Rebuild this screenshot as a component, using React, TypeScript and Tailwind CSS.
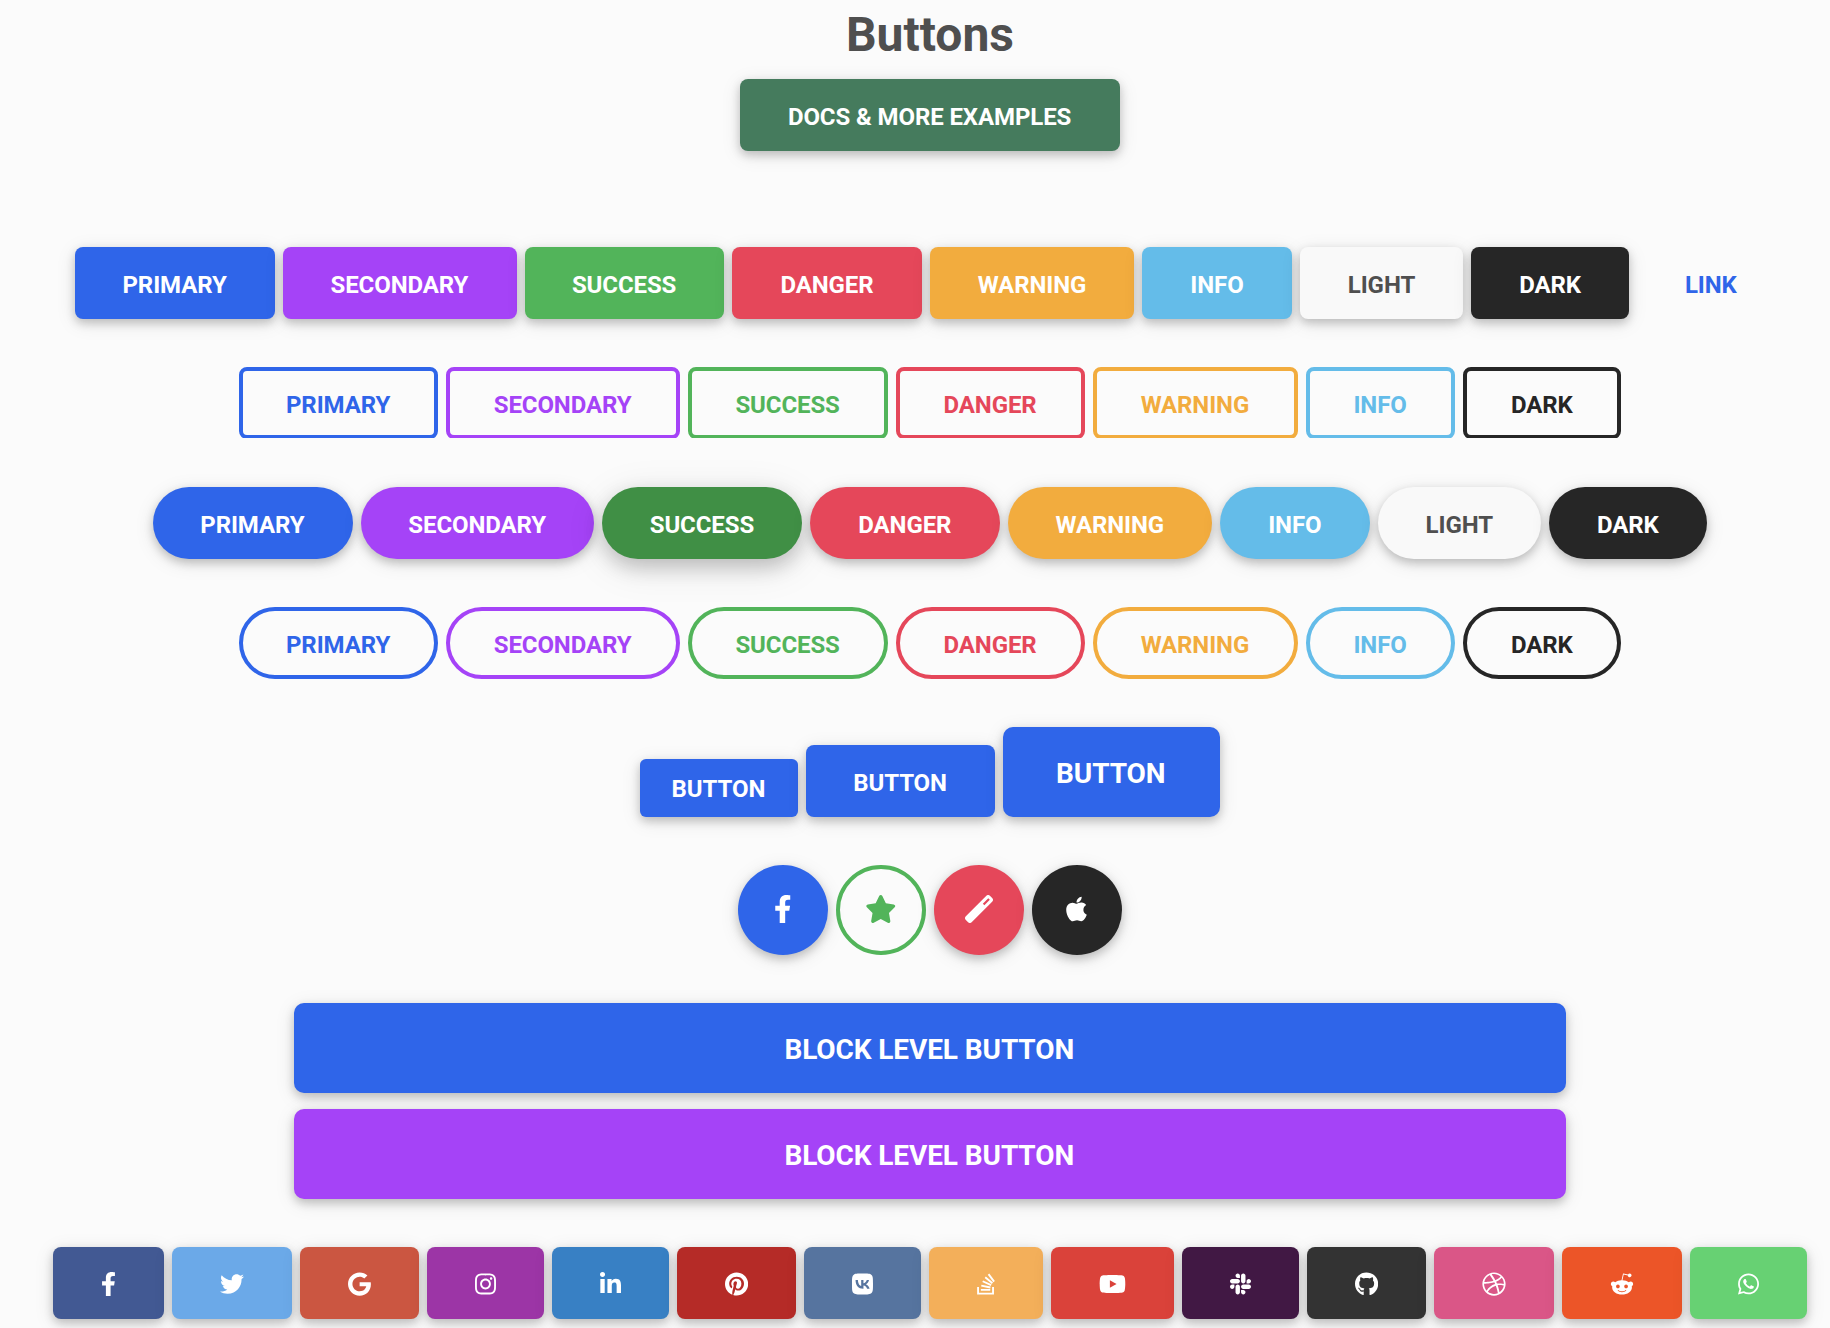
import React from "react";
import {
  FaFacebookF,
  FaTwitter,
  FaGoogle,
  FaInstagram,
  FaLinkedinIn,
  FaPinterest,
  FaStackOverflow,
  FaYoutube,
  FaSlack,
  FaGithub,
  FaDribbble,
  FaRedditAlien,
  FaWhatsapp,
  FaApple,
} from "react-icons/fa";
import { FaStar, FaVk } from "react-icons/fa6";

const SHADOW = "shadow-[0_4px_10px_0_rgba(0,0,0,0.2),0_4px_20px_0_rgba(0,0,0,0.1)]";
const BASE = "flex shrink-0 items-center justify-center whitespace-nowrap uppercase font-bold tracking-[-0.1px]";
const MD = "h-[72px] pt-1 pr-[0.8px] text-[24px] leading-9";

const solid = [
  { label: "Primary", w: "w-[200px]", c: "bg-[#2f65e9] text-white" },
  { label: "Secondary", w: "w-[233.6px]", c: "bg-[#a543f7] text-white" },
  { label: "Success", w: "w-[199.8px]", c: "bg-[#52b45a] text-white" },
  { label: "Danger", w: "w-[190px]", c: "bg-[#e5475a] text-white" },
  { label: "Warning", w: "w-[204px]", c: "bg-[#f2ac3e] text-white" },
  { label: "Info", w: "w-[150px]", c: "bg-[#64bce9] text-white" },
  { label: "Light", w: "w-[163px]", c: "bg-[#f9f9f9] text-[#4f4f4f]" },
  { label: "Dark", w: "w-[158px]", c: "bg-[#262626] text-white" },
];

const outline = [
  { label: "Primary", w: "w-[199px]", c: "border-[#2f65e9] text-[#2f65e9]" },
  { label: "Secondary", w: "w-[234px]", c: "border-[#a543f7] text-[#a543f7]" },
  { label: "Success", w: "w-[200px]", c: "border-[#52b45a] text-[#52b45a]" },
  { label: "Danger", w: "w-[189px]", c: "border-[#e5475a] text-[#e5475a]" },
  { label: "Warning", w: "w-[204.6px]", c: "border-[#f2ac3e] text-[#f2ac3e]" },
  { label: "Info", w: "w-[149.8px]", c: "border-[#64bce9] text-[#64bce9]" },
  { label: "Dark", w: "w-[157.6px]", c: "border-[#262626] text-[#262626]" },
];

const social = [
  { Icon: FaFacebookF, w: "w-[111px]", i: "w-[15px]", bg: "bg-[#425993]" },
  { Icon: FaTwitter, w: "w-[120px]", i: "w-[24px]", bg: "bg-[#6ba9e8]" },
  { Icon: FaGoogle, w: "w-[118.9px]", i: "w-[22.9px]", bg: "bg-[#cb5641]" },
  { Icon: FaInstagram, w: "w-[117px]", i: "w-[21px]", bg: "bg-[#9c35a6]" },
  { Icon: FaLinkedinIn, w: "w-[117px]", i: "w-[21px]", bg: "bg-[#3880c4]" },
  { Icon: FaPinterest, w: "w-[119.2px]", i: "w-[23.2px]", bg: "bg-[#b52b27]" },
  { Icon: FaVk, w: "w-[117px]", i: "w-[21px]", bg: "bg-[#56749f]" },
  { Icon: FaStackOverflow, w: "w-[114px]", i: "w-[18px]", bg: "bg-[#f3af5a]" },
  { Icon: FaYoutube, w: "w-[123px]", i: "w-[27px]", bg: "bg-[#da423a]" },
  { Icon: FaSlack, w: "w-[117px]", i: "w-[21px]", bg: "bg-[#411844]" },
  { Icon: FaGithub, w: "w-[119.2px]", i: "w-[23.2px]", bg: "bg-[#333333]" },
  { Icon: FaDribbble, w: "w-[120px]", i: "w-[24px]", bg: "bg-[#da5687]" },
  { Icon: FaRedditAlien, w: "w-[120px]", i: "w-[24px]", bg: "bg-[#ec5528]" },
  { Icon: FaWhatsapp, w: "w-[117px]", i: "w-[21px]", bg: "bg-[#67d173]" },
];

function WandIcon({ className }: { className?: string }) {
  return (
    <svg viewBox="0 0 28 28" fill="currentColor" fillRule="evenodd" className={className}>
      <path
        transform="rotate(-45 14 14)"
        d="M-0.5 9.9H28.5A2.5 2.5 0 0 1 31 12.4V15.6A2.5 2.5 0 0 1 28.5 18.1H-0.5A2.5 2.5 0 0 1 -3 15.6V12.4A2.5 2.5 0 0 1 -0.5 9.9ZM20.5 12.9V15.1H28.2V12.9Z"
      />
    </svg>
  );
}

function Row({ className = "", children }: { className?: string; children: React.ReactNode }) {
  return <div className={`flex justify-center gap-2 ${className}`}>{children}</div>;
}

export default function App() {
  return (
    <div className="h-[1328px] w-full overflow-hidden bg-[#fbfbfb] font-['Roboto',sans-serif]">
      <div className="flex w-[1860px] flex-col">
        <h2 className="mt-[6px] text-center text-[48px] leading-[58px] font-bold text-[#4f4f4f]">Buttons</h2>

        <Row className="mt-[15px]">
          <button className={`${BASE} ${MD} ${SHADOW} w-[380px] rounded-lg bg-[#457b5d] text-white`}>
            Docs &amp; more examples
          </button>
        </Row>

        <Row className="mt-24">
          {solid.map((b) => (
            <button key={b.label} className={`${BASE} ${MD} ${SHADOW} rounded-lg ${b.w} ${b.c}`}>
              {b.label}
            </button>
          ))}
          <button className={`${BASE} ${MD} w-[147.6px] text-[#2f65e9]`}>Link</button>
        </Row>

        <Row className="mt-12 h-[71px] overflow-hidden">
          {outline.map((b) => (
            <button key={b.label} className={`${BASE} ${MD} rounded-lg border-4 ${b.w} ${b.c}`}>
              {b.label}
            </button>
          ))}
        </Row>

        <Row className="mt-[49px]">
          {solid.map((b) =>
            b.label === "Success" ? (
              <button
                key={b.label}
                className={`${BASE} ${MD} w-[199.8px] rounded-full bg-[#408f45] text-white shadow-[0_8px_20px_0_rgba(0,0,0,0.2),0_8px_40px_0_rgba(0,0,0,0.1)]`}
              >
                {b.label}
              </button>
            ) : (
              <button key={b.label} className={`${BASE} ${MD} ${SHADOW} rounded-full ${b.w} ${b.c}`}>
                {b.label}
              </button>
            ),
          )}
        </Row>

        <Row className="mt-12">
          {outline.map((b) => (
            <button key={b.label} className={`${BASE} ${MD} rounded-full border-4 ${b.w} ${b.c}`}>
              {b.label}
            </button>
          ))}
        </Row>

        <Row className="mt-12 items-end">
          <button className={`${BASE} ${SHADOW} h-[58px] w-[158px] rounded-md bg-[#2f65e9] pt-[2px] pr-[1.2px] text-[24px] leading-9 text-white`}>
            Button
          </button>
          <button className={`${BASE} ${MD} ${SHADOW} w-[189px] rounded-lg bg-[#2f65e9] text-white`}>Button</button>
          <button className={`${BASE} ${SHADOW} h-[90px] w-[217px] rounded-[10px] bg-[#2f65e9] pt-1 pr-[1.5px] text-[28px] leading-[42px] text-white`}>
            Button
          </button>
        </Row>

        <Row className="mt-12">
          <button className={`${BASE} ${SHADOW} size-[90px] rounded-full bg-[#2f65e9] pr-px pb-[3px] text-white`}>
            <FaFacebookF className="h-[28px] w-[17.5px]" />
          </button>
          <button className={`${BASE} size-[90px] rounded-full border-4 border-[#52b45a] pr-px pb-[3px] text-[#52b45a]`}>
            <FaStar className="h-[28px] w-[31.5px]" />
          </button>
          <button className={`${BASE} ${SHADOW} size-[90px] rounded-full bg-[#e5475a] pr-px pb-[3px] text-white`}>
            <WandIcon className="size-[28px]" />
          </button>
          <button className={`${BASE} ${SHADOW} size-[90px] rounded-full bg-[#262626] pr-px pb-[3px] text-white`}>
            <FaApple className="h-[28px] w-[21px]" />
          </button>
        </Row>

        <div className="mx-[294px] mt-12 flex flex-col gap-4 text-[28px] leading-[42px] text-white">
          <button className={`${BASE} ${SHADOW} h-[90px] rounded-[10px] bg-[#2f65e9] pt-1 pr-[1.5px]`}>Block level button</button>
          <button className={`${BASE} ${SHADOW} h-[90px] rounded-[10px] bg-[#a543f7] pt-1 pr-[1.5px]`}>Block level button</button>
        </div>

        <Row className="mt-12">
          {social.map(({ Icon, w, i, bg }) => (
            <button key={bg} className={`${BASE} ${SHADOW} h-[72px] rounded-lg pt-[2px] text-white ${w} ${bg}`}>
              <Icon className={`h-6 ${i}`} />
            </button>
          ))}
        </Row>
      </div>
    </div>
  );
}
